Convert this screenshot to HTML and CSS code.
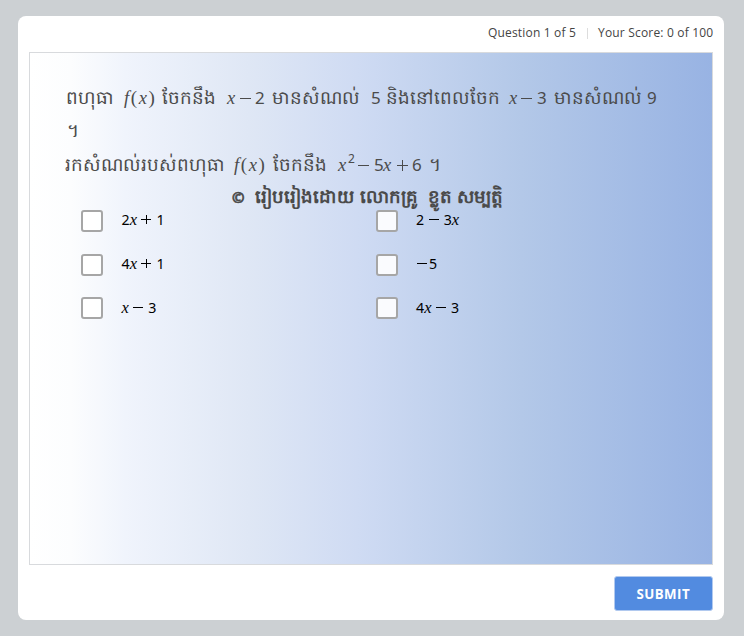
FILE: index.html
```
<!DOCTYPE html>
<html lang="km">
<head><meta charset="utf-8"><title>Quiz</title><link rel="stylesheet" href="styles.css"></head>
<body>
<main class="player">
  <header class="status"><span>Question 1 of 5</span><i class="divider"></i><span class="score">Your Score: 0 of 100</span></header>
  <section class="slide">
    <div class="prompt">
      <div class="line line-one"><span>ពហុធា</span><span class="fn"><i>f</i>(<i>x</i>)</span><span>ចែកនឹង</span><i>x</i><b></b><span class="num">2</span><span>មានសំណល់</span><span class="num">5</span><span>និងនៅពេលចែក</span><i>x</i><b></b><span class="num">3</span><span>មានសំណល់</span><span class="num">9</span></div>
      <div class="line line-two"><span>។</span></div>
      <div class="line line-three"><span>រកសំណល់របស់ពហុធា</span><span class="fn"><i>f</i>(<i>x</i>)</span><span>ចែកនឹង</span><i>x</i><span class="power">2</span><b></b><span class="num">5</span><i>x</i><b class="plus"></b><span class="num">6</span><span>។</span></div>
    </div>
    <div class="credit"><span class="copyright">©</span><span>រៀបរៀងដោយ</span><span>លោកគ្រូ</span><span>ខ្លូត</span><span>សម្បត្តិ</span></div>
    <div class="choices">
      <label class="choice"><input type="checkbox"><span class="math"><span>2</span><i>x</i><b class="plus"></b><span>1</span></span></label>
      <label class="choice"><input type="checkbox"><span class="math"><span>2</span><b></b><span>3</span><i>x</i></span></label>
      <label class="choice"><input type="checkbox"><span class="math"><span>4</span><i>x</i><b class="plus"></b><span>1</span></span></label>
      <label class="choice"><input type="checkbox"><span class="math negative"><b></b><span>5</span></span></label>
      <label class="choice"><input type="checkbox"><span class="math"><i>x</i><b></b><span>3</span></span></label>
      <label class="choice"><input type="checkbox"><span class="math"><span>4</span><i>x</i><b></b><span>3</span></span></label>
    </div>
  </section>
  <footer><button>SUBMIT</button></footer>
</main>
</body>
</html>
```
FILE: styles.css
```
* { box-sizing: border-box; }
body { margin: 0; height: 636px; padding: 16px 20px 16px 18px; background: #ccd0d3; font-family: "Open Sans", sans-serif; }
.player { height: 604px; padding: 0 11px; border-radius: 8px; background: #fff; }
.status { height: 36px; display: flex; justify-content: flex-end; align-items: center; padding-bottom: 4px; font-size: 12px; letter-spacing: .18px; color: #444; white-space: nowrap; }
.status span { width: 88px; }
.status .score { width: 115px; }
.divider { width: 1px; height: 11px; margin: 2px 10px 0 11px; background: #ddd; }
.slide { position: relative; height: 513px; padding: 27px 0 0 36px; border: 1px solid #d8dadd; background: linear-gradient(90deg, #fff 0%, #fcfdfe 6%, #f0f4fc 14%, #dfe7f5 32%, #cfdbf3 48%, #b3c8e8 72%, #98b3e3 100%); }
.line { display: grid; height: 33.3px; align-items: baseline; line-height: 33px; color: #4b4b4b; font-family: "Noto Sans", sans-serif; font-size: 18.4px; white-space: nowrap; }
.line-one { grid-template-columns: 58px 38px 65px 13px 15px 17px 99px 15px 123px 12px 16px 17px 93px 12px; }
.line-two { padding-left: 1px; }
.line-three { margin-left: -1px; grid-template-columns: 169px 39px 65px 10px 10px 16px 9px 14px 15px 17px 12px; }
.line i, .math i { font-family: "Liberation Serif", serif; font-style: italic; }
.line i { font-size: 18.5px; }
.line .fn { font-family: "Liberation Serif", serif; font-size: 19px; letter-spacing: 1.6px; }
.line .num { font-size: 17px; }
.line .power { font-size: 12px; position: relative; top: -8px; }
b { display: block; position: relative; width: 11px; height: 1px; background: currentColor; top: -5px; }
.plus::after { content: ""; position: absolute; left: 5px; top: -5px; width: 1px; height: 11px; background: currentColor; }
.credit { position: absolute; left: 202px; top: 125px; display: flex; align-items: baseline; color: #4b4b4b; font: 700 18.2px/36px "Noto Sans", sans-serif; white-space: nowrap; }
.credit span { width: 68px; }
.credit .copyright { width: 23px; font-size: 15px; -webkit-text-stroke: .7px; }
.credit span:nth-child(2) { width: 105px; }
.credit span:nth-child(4) { width: 29px; }
.choices { display: grid; grid-template-columns: 294.5px 240px; grid-auto-rows: 43.7px; padding: 19px 0 0 15px; }
.choice { display: flex; height: 44px; align-items: center; }
.choice input { appearance: none; width: 22px; height: 22px; margin: 0 18.5px 0 0; border: 2px solid #a6a6a6; border-radius: 3px; background: #ffffffe6; }
.math { display: flex; align-items: baseline; position: relative; top: -.5px; color: #000; font: 14.2px/22px "Noto Sans", sans-serif; }
.math i { font-size: 16.5px; }
.math b { width: 10px; margin: 0 5px 0 4.5px; }
.math .plus::after { left: 5px; top: -4px; height: 9px; }
.math.negative b { margin: 0 2px 0 1px; }
footer { display: flex; justify-content: flex-end; padding-top: 11px; }
button { width: 99.5px; height: 34.5px; padding: 1px 0 0; border: 1px solid #b1c9ef; border-radius: 3px; background: #528be0; color: #fff; font: 700 13.3px "Open Sans", sans-serif; letter-spacing: .45px; }
```
